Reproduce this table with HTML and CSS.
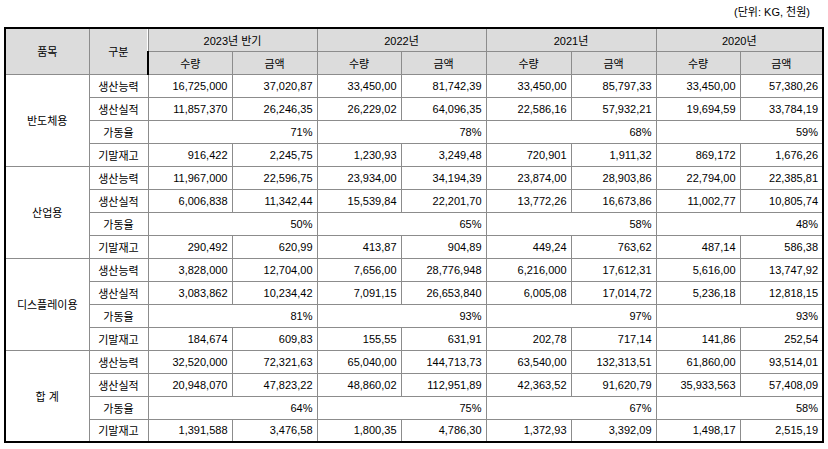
FILE: index.html
```html
<!DOCTYPE html>
<html lang="ko">
<head>
<meta charset="utf-8">
<link rel="stylesheet" href="styles.css">
</head>
<body>
<div class="unit">(단위: KG, 천원)</div>
<table class="grid">
  <colgroup>
    <col class="c-item"><col class="c-kind">
    <col class="c-a"><col class="c-b"><col class="c-a"><col class="c-b">
    <col class="c-b"><col class="c-b"><col class="c-a"><col class="c-z">
  </colgroup>
  <thead>
    <tr>
      <th rowspan="2">품목</th>
      <th rowspan="2">구분</th>
      <th colspan="2">2023년 반기</th>
      <th colspan="2">2022년</th>
      <th colspan="2">2021년</th>
      <th colspan="2">2020년</th>
    </tr>
    <tr>
      <th>수량</th><th>금액</th><th>수량</th><th>금액</th>
      <th>수량</th><th>금액</th><th>수량</th><th>금액</th>
    </tr>
  </thead>
  <tbody>
    <tr class="grp">
      <td rowspan="4" class="item">반도체용</td>
      <td class="kind">생산능력</td>
      <td>16,725,000</td><td>37,020,87</td><td>33,450,00</td><td>81,742,39</td>
      <td>33,450,00</td><td>85,797,33</td><td>33,450,00</td><td>57,380,26</td>
    </tr>
    <tr>
      <td class="kind">생산실적</td>
      <td>11,857,370</td><td>26,246,35</td><td>26,229,02</td><td>64,096,35</td>
      <td>22,586,16</td><td>57,932,21</td><td>19,694,59</td><td>33,784,19</td>
    </tr>
    <tr>
      <td class="kind">가동율</td>
      <td colspan="2">71%</td><td colspan="2">78%</td><td colspan="2">68%</td><td colspan="2">59%</td>
    </tr>
    <tr>
      <td class="kind">기말재고</td>
      <td>916,422</td><td>2,245,75</td><td>1,230,93</td><td>3,249,48</td>
      <td>720,901</td><td>1,911,32</td><td>869,172</td><td>1,676,26</td>
    </tr>

    <tr class="grp">
      <td rowspan="4" class="item">산업용</td>
      <td class="kind">생산능력</td>
      <td>11,967,000</td><td>22,596,75</td><td>23,934,00</td><td>34,194,39</td>
      <td>23,874,00</td><td>28,903,86</td><td>22,794,00</td><td>22,385,81</td>
    </tr>
    <tr>
      <td class="kind">생산실적</td>
      <td>6,006,838</td><td>11,342,44</td><td>15,539,84</td><td>22,201,70</td>
      <td>13,772,26</td><td>16,673,86</td><td>11,002,77</td><td>10,805,74</td>
    </tr>
    <tr>
      <td class="kind">가동율</td>
      <td colspan="2">50%</td><td colspan="2">65%</td><td colspan="2">58%</td><td colspan="2">48%</td>
    </tr>
    <tr>
      <td class="kind">기말재고</td>
      <td>290,492</td><td>620,99</td><td>413,87</td><td>904,89</td>
      <td>449,24</td><td>763,62</td><td>487,14</td><td>586,38</td>
    </tr>

    <tr class="grp">
      <td rowspan="4" class="item">디스플레이용</td>
      <td class="kind">생산능력</td>
      <td>3,828,000</td><td>12,704,00</td><td>7,656,00</td><td>28,776,948</td>
      <td>6,216,000</td><td>17,612,31</td><td>5,616,00</td><td>13,747,92</td>
    </tr>
    <tr>
      <td class="kind">생산실적</td>
      <td>3,083,862</td><td>10,234,42</td><td>7,091,15</td><td>26,653,840</td>
      <td>6,005,08</td><td>17,014,72</td><td>5,236,18</td><td>12,818,15</td>
    </tr>
    <tr>
      <td class="kind">가동율</td>
      <td colspan="2">81%</td><td colspan="2">93%</td><td colspan="2">97%</td><td colspan="2">93%</td>
    </tr>
    <tr>
      <td class="kind">기말재고</td>
      <td>184,674</td><td>609,83</td><td>155,55</td><td>631,91</td>
      <td>202,78</td><td>717,14</td><td>141,86</td><td>252,54</td>
    </tr>

    <tr class="grp">
      <td rowspan="4" class="item">합 계</td>
      <td class="kind">생산능력</td>
      <td>32,520,000</td><td>72,321,63</td><td>65,040,00</td><td>144,713,73</td>
      <td>63,540,00</td><td>132,313,51</td><td>61,860,00</td><td>93,514,01</td>
    </tr>
    <tr>
      <td class="kind">생산실적</td>
      <td>20,948,070</td><td>47,823,22</td><td>48,860,02</td><td>112,951,89</td>
      <td>42,363,52</td><td>91,620,79</td><td>35,933,563</td><td>57,408,09</td>
    </tr>
    <tr>
      <td class="kind">가동율</td>
      <td colspan="2">64%</td><td colspan="2">75%</td><td colspan="2">67%</td><td colspan="2">58%</td>
    </tr>
    <tr>
      <td class="kind">기말재고</td>
      <td>1,391,588</td><td>3,476,58</td><td>1,800,35</td><td>4,786,30</td>
      <td>1,372,93</td><td>3,392,09</td><td>1,498,17</td><td>2,515,19</td>
    </tr>
  </tbody>
</table>
</body>
</html>
```
FILE: styles.css
```css
html, body {
  margin: 0;
  padding: 0;
  background: #ffffff;
}
body {
  font-family: "Liberation Sans", "Noto Sans CJK KR", sans-serif;
  font-size: 11px;
  color: #000000;
}
.unit {
  height: 27px;
  line-height: 24px;
  text-align: right;
  padding-right: 18px;
  box-sizing: border-box;
}
.grid {
  margin-left: 4px;
  border-collapse: collapse;
  table-layout: fixed;
  width: 819px;
  border: 2px solid #000000;
}
.c-item { width: 84px; }
.c-kind { width: 59px; }
.c-a { width: 84px; }
.c-b { width: 85px; }
.c-z { width: 83px; }
.grid th,
.grid td {
  border: 1px solid #8c8c8c;
  height: 23px;
  padding: 0 4px 0 0;
  box-sizing: border-box;
  white-space: nowrap;
  overflow: hidden;
}
.grid th {
  background: #dcdcdc;
  font-weight: normal;
  text-align: center;
  padding: 0;
}
.grid td {
  text-align: right;
}
.grid td.item,
.grid td.kind {
  text-align: center;
  padding: 0;
}
.grid thead tr:first-child th {
  border-top: 2px solid #000000;
}
.grid tr > :first-child {
  border-left: 2px solid #000000;
}
.grid tbody tr:not(.grp) > :first-child {
  border-left: 1px solid #8c8c8c;
}
.grid tr > :last-child {
  border-right: 2px solid #000000;
}
.grid tbody tr:last-child td {
  border-bottom: 2px solid #000000;
}
```
